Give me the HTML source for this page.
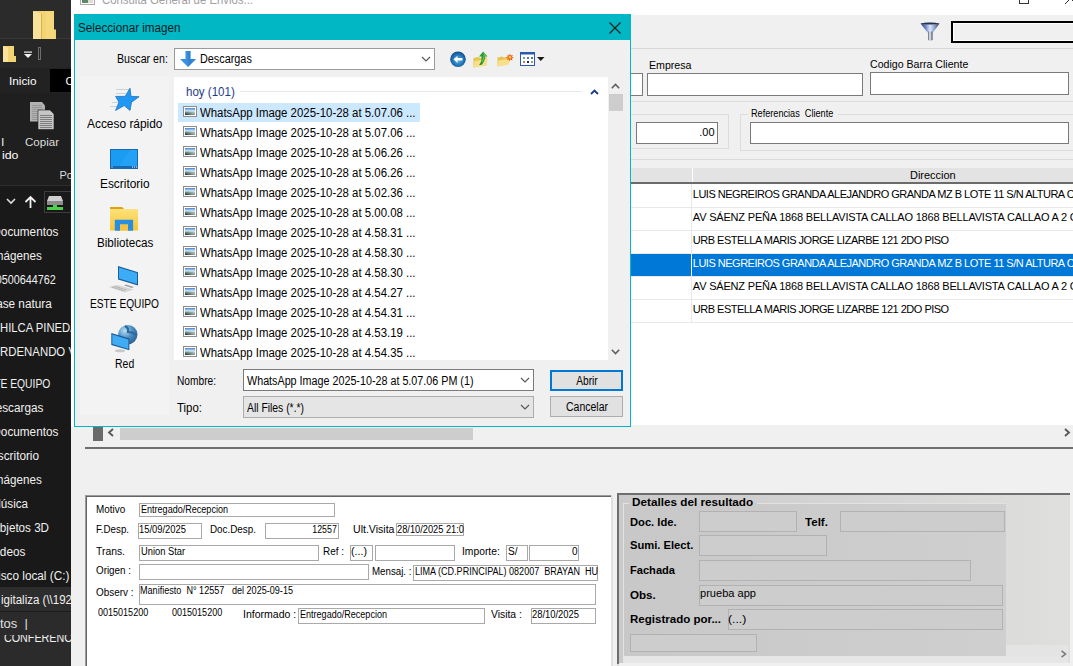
<!DOCTYPE html><html><head><meta charset='utf-8'><style>
*{margin:0;padding:0}
html,body{width:1073px;height:666px;overflow:hidden;background:#f0f0f0;position:relative}
.a{position:absolute}
.t{white-space:pre}
</style></head><body><div class="a" style="left:0px;top:0px;width:71px;height:666px;background:#191919;"></div>
<div class="a" style="left:0px;top:0px;width:71px;height:38px;background:#2b2b2b;"></div>
<div class="a" style="left:0px;top:38px;width:71px;height:30px;background:#272727;"></div>
<div class="a" style="left:0px;top:68px;width:71px;height:25px;background:#222222;"></div>
<div class="a" style="left:50px;top:69px;width:21px;height:23px;background:#000000;"></div>
<div class="a" style="left:0px;top:93px;width:71px;height:92px;background:#1f1f1f;"></div>
<div class="a" style="left:0px;top:185px;width:71px;height:1px;background:#2e2e2e;"></div>
<div class="a" style="left:0px;top:186px;width:71px;height:32px;background:#191919;"></div>
<div class="a" style="left:0px;top:38px;width:71px;height:1px;background:#3a3a3a;"></div>
<svg class="a" style="left:33px;top:11px" width="23" height="28" viewBox="0 0 23 28"><path d="M0 0H21V18.5H23V28H0Z" fill="#f3d474"/><path d="M0 0L8 2.5V28H0Z" fill="#f9e39a"/><rect x="8" y="2.5" width="1" height="25.5" fill="#dcb24a"/><rect x="13" y="0" width="8" height="28" fill="#f7db82" opacity="0.6"/></svg>
<svg class="a" style="left:3px;top:46px" width="13" height="16" viewBox="0 0 13 16"><path d="M0 0H11V10H13V16H0Z" fill="#f3d474"/><path d="M0 0L5 1.5V16H0Z" fill="#f9e39a"/></svg>
<svg class="a" style="left:24px;top:51px" width="8" height="8" viewBox="0 0 8 8"><rect x="0" y="0.5" width="8" height="1.2" fill="#eee"/><path d="M0 3h8L4 7z" fill="#f4f4f4"/></svg>
<div class="a" style="left:38px;top:47px;width:3px;height:13px;border:1px solid #6e6e6e;box-sizing:border-box;"></div>
<div class="a t" id="t0" style="top:76.00px;font-size:11px;line-height:11px;color:#ffffff;font-weight:400;font-family:'Liberation Sans';left:8.50px;transform-origin:left;transform: scaleX(1.0706);">Inicio</div>
<div class="a t" id="t1" style="top:76.00px;font-size:11px;line-height:11px;color:#ffffff;font-weight:400;font-family:'Liberation Sans';left:65.50px;transform-origin:left;transform:;">C</div>
<svg class="a" style="left:30px;top:102px" width="25" height="28" viewBox="0 0 25 28"><path d="M0 0H12L15 3.5V19.5H0Z" fill="#b2b2b2"/><path d="M2 3.5h10M2 5.5h10M2 7.5h10M2 9.5h10M2 11.5h10M2 13.5h10M2 15.5h10M2 17.5h10" stroke="#969696" stroke-width="1"/><path d="M8 8H20L24 12V27.5H8Z" fill="#c6c6c6" stroke="#1f1f1f" stroke-width="0.6"/><path d="M10 13.5h12M10 15.5h12M10 17.5h12M10 19.5h12M10 21.5h12M10 23.5h12M10 25.5h12" stroke="#7e7e7e" stroke-width="1"/></svg>
<div class="a t" id="t2" style="top:137.00px;font-size:11px;line-height:11px;color:#dcdcdc;font-weight:400;font-family:'Liberation Sans';left:25.00px;transform-origin:left;transform: scaleX(1.0492);">Copiar</div>
<div class="a t" id="t3" style="top:137.00px;font-size:11px;line-height:11px;color:#ffffff;font-weight:400;font-family:'Liberation Sans';left:1.50px;transform-origin:left;transform:;">l</div>
<div class="a t" id="t4" style="top:150.00px;font-size:11px;line-height:11px;color:#ffffff;font-weight:400;font-family:'Liberation Sans';left:1.50px;transform-origin:left;transform: scaleX(1.1234);">ido</div>
<div class="a t" id="t5" style="top:170.00px;font-size:11px;line-height:11px;color:#dcdcdc;font-weight:400;font-family:'Liberation Sans';left:59.50px;transform-origin:left;transform:;">Po</div>
<svg class="a" style="left:6px;top:198px" width="10" height="7" viewBox="0 0 10 7"><path d="M1 1l4 4 4-4" stroke="#ddd" stroke-width="1.6" fill="none"/></svg>
<svg class="a" style="left:24px;top:195px" width="13" height="14" viewBox="0 0 13 14"><path d="M6.5 13V2M1.5 7l5-5 5 5" stroke="#f0f0f0" stroke-width="1.8" fill="none"/></svg>
<div class="a" style="left:44px;top:191px;width:28px;height:22px;border:1px solid #3c3c3c;box-sizing:border-box;"></div>
<svg class="a" style="left:47px;top:196px" width="16" height="14" viewBox="0 0 16 14"><path d="M2 0h12l2 5H0z" fill="#cfcfcf"/><rect x="0" y="5" width="16" height="4" fill="#8d8d8d"/><rect x="6" y="9" width="4" height="2" fill="#4ccf4c"/><rect x="0" y="11" width="16" height="3" fill="#4ccf4c"/></svg>
<div class="a t" id="t6" style="top:226.00px;font-size:12px;line-height:12px;color:#f0f0f0;font-weight:400;font-family:'Liberation Sans';right:1014.50px;transform-origin:right;transform: scaleX(0.9800);">Documentos</div>
<div class="a t" id="t7" style="top:250.00px;font-size:12px;line-height:12px;color:#f0f0f0;font-weight:400;font-family:'Liberation Sans';right:1031.50px;transform-origin:right;transform: scaleX(0.9700);">Imágenes</div>
<div class="a t" id="t8" style="top:274.00px;font-size:12px;line-height:12px;color:#f0f0f0;font-weight:400;font-family:'Liberation Sans';right:1017.00px;transform-origin:right;transform: scaleX(0.9000);">0500644762</div>
<div class="a t" id="t9" style="top:298.00px;font-size:12px;line-height:12px;color:#f0f0f0;font-weight:400;font-family:'Liberation Sans';right:1021.50px;transform-origin:right;transform: scaleX(0.9800);">Base natura</div>
<div class="a t" id="t10" style="top:378.00px;font-size:12px;line-height:12px;color:#f0f0f0;font-weight:400;font-family:'Liberation Sans';right:1022.50px;transform-origin:right;transform: scaleX(0.8600);">ESTE EQUIPO</div>
<div class="a t" id="t11" style="top:402.00px;font-size:12px;line-height:12px;color:#f0f0f0;font-weight:400;font-family:'Liberation Sans';right:1029.50px;transform-origin:right;transform: scaleX(0.9800);">Descargas</div>
<div class="a t" id="t12" style="top:426.00px;font-size:12px;line-height:12px;color:#f0f0f0;font-weight:400;font-family:'Liberation Sans';right:1014.50px;transform-origin:right;transform: scaleX(0.9800);">Documentos</div>
<div class="a t" id="t13" style="top:450.00px;font-size:12px;line-height:12px;color:#f0f0f0;font-weight:400;font-family:'Liberation Sans';right:1033.50px;transform-origin:right;transform: scaleX(0.9800);">Escritorio</div>
<div class="a t" id="t14" style="top:474.00px;font-size:12px;line-height:12px;color:#f0f0f0;font-weight:400;font-family:'Liberation Sans';right:1031.50px;transform-origin:right;transform: scaleX(0.9700);">Imágenes</div>
<div class="a t" id="t15" style="top:498.00px;font-size:12px;line-height:12px;color:#f0f0f0;font-weight:400;font-family:'Liberation Sans';right:1044.50px;transform-origin:right;transform: scaleX(0.9700);">Música</div>
<div class="a t" id="t16" style="top:522.00px;font-size:12px;line-height:12px;color:#f0f0f0;font-weight:400;font-family:'Liberation Sans';right:1024.00px;transform-origin:right;transform: scaleX(0.9700);">Objetos 3D</div>
<div class="a t" id="t17" style="top:546.00px;font-size:12px;line-height:12px;color:#f0f0f0;font-weight:400;font-family:'Liberation Sans';right:1047.50px;transform-origin:right;transform: scaleX(0.9800);">Vídeos</div>
<div class="a t" id="t18" style="top:570.00px;font-size:12px;line-height:12px;color:#f0f0f0;font-weight:400;font-family:'Liberation Sans';right:1003.50px;transform-origin:right;transform: scaleX(0.9800);">Disco local (C:)</div>
<div class="a t" id="t19" style="top:322.00px;font-size:12px;line-height:12px;color:#f0f0f0;font-weight:400;font-family:'Liberation Sans';left:0.00px;transform-origin:left;transform: scaleX(0.9400);">HILCA PINEDA</div>
<div class="a t" id="t20" style="top:346.00px;font-size:12px;line-height:12px;color:#f0f0f0;font-weight:400;font-family:'Liberation Sans';left:0.00px;transform-origin:left;transform: scaleX(0.9500);">RDENANDO VA</div>
<div class="a" style="left:0px;top:587px;width:71px;height:24px;background:#2d2d2d;"></div>
<div class="a t" id="t21" style="top:594.00px;font-size:12px;line-height:12px;color:#f0f0f0;font-weight:400;font-family:'Liberation Sans';left:1.00px;transform-origin:left;transform: scaleX(0.9589);">igitaliza (\\192</div>
<div class="a" style="left:0px;top:611px;width:71px;height:55px;background:#2b2b2b;"></div>
<div class="a t" id="t22" style="top:618.00px;font-size:12px;line-height:12px;color:#e0e0e0;font-weight:400;font-family:'Liberation Sans';left:0.00px;transform-origin:left;transform: scaleX(1.0854);">tos  |</div>
<div class="a t" id="t23" style="top:632.00px;font-size:12px;line-height:12px;color:#f0f0f0;font-weight:400;font-family:'Liberation Sans';left:4.00px;transform-origin:left;transform: scaleX(0.8946);">CONFERENC</div>
<div class="a" style="left:0px;top:630px;width:71px;height:5px;background:#2b2b2b;"></div>
<div class="a" style="left:0px;top:611px;width:71px;height:1px;background:#1c1c1c;"></div>
<div class="a" style="left:71px;top:0px;width:3px;height:666px;background:#f0f0f0;"></div>
<div class="a" style="left:71px;top:0px;width:3px;height:427px;background:#ffffff;"></div>
<div class="a" style="left:72px;top:0px;width:1001px;height:15px;background:#ffffff;"></div>
<svg class="a" style="left:80px;top:-10px" width="15" height="15" viewBox="0 0 15 15"><rect x="0.5" y="0.5" width="14" height="14" fill="#fff" stroke="#aaa"/><rect x="2" y="2" width="6" height="11" fill="#5a8a6a"/><rect x="8" y="2" width="5" height="11" fill="#e8d8d8"/></svg>
<div class="a t" id="t24" style="top:-6.00px;font-size:12px;line-height:12px;color:#a0a0a0;font-weight:400;font-family:'Liberation Sans';left:102.00px;transform-origin:left;transform: scaleX(0.9472);">Consulta General de Envios...</div>
<svg class="a" style="left:1019px;top:-6px" width="12" height="11" viewBox="0 0 12 11"><rect x="0.5" y="0.5" width="9" height="9" fill="none" stroke="#333"/></svg>
<svg class="a" style="left:1062px;top:-10px" width="16" height="16" viewBox="0 0 16 16"><path d="M3 14L14 3M3 3L14 14" stroke="#333" stroke-width="1"/></svg>
<div class="a" style="left:631px;top:48px;width:442px;height:1px;background:#d8d8d8;"></div>
<svg class="a" style="left:920px;top:22px" width="20" height="20" viewBox="0 0 20 20"><defs><linearGradient id="fg" x1="0" x2="1"><stop offset="0" stop-color="#2e3a60"/><stop offset="0.3" stop-color="#7890d0"/><stop offset="0.5" stop-color="#dce8ff"/><stop offset="0.75" stop-color="#8aa0c8"/><stop offset="1" stop-color="#2a3048"/></linearGradient><linearGradient id="fg2" x1="0" x2="1"><stop offset="0" stop-color="#5a6478"/><stop offset="0.45" stop-color="#f0f6ff"/><stop offset="1" stop-color="#3a4050"/></linearGradient></defs><path d="M0.5 1.5Q10 -0.5 19.5 1.5L13 10.5H7.5z" fill="url(#fg)"/><path d="M0.5 1.5Q10 -0.5 19.5 1.5Q10 3.5 0.5 1.5z" fill="#2a3048"/><path d="M8 9.5h4.5v8.5q-2.2 1.5-4.5 0z" fill="url(#fg2)"/></svg>
<div class="a" style="left:951px;top:21px;width:130px;height:22px;border:2px solid #000;box-sizing:border-box;box-shadow:inset 0 0 0 1px #fff;"></div>
<div class="a t" id="t25" style="top:60.00px;font-size:11px;line-height:11px;color:#000;font-weight:400;font-family:'Liberation Sans';left:648.60px;transform-origin:left;transform: scaleX(0.9652);">Empresa</div>
<div class="a" style="left:620px;top:73px;width:23px;height:23px;background:#fff;border:1px solid #7a7a7a;box-sizing:border-box;"></div>
<div class="a" style="left:647px;top:73px;width:216px;height:23px;background:#fff;border:1px solid #7a7a7a;box-sizing:border-box;"></div>
<div class="a t" id="t26" style="top:59.00px;font-size:11px;line-height:11px;color:#000;font-weight:400;font-family:'Liberation Sans';left:869.70px;transform-origin:left;transform: scaleX(0.9625);">Codigo Barra Cliente</div>
<div class="a" style="left:870px;top:72px;width:199px;height:23px;background:#fff;border:1px solid #7a7a7a;box-sizing:border-box;"></div>
<div class="a" style="left:631px;top:101px;width:442px;height:1px;background:#dadada;"></div>
<div class="a" style="left:600px;top:114px;width:129px;height:35px;border:1px solid #dcdcdc;box-sizing:border-box;"></div>
<div class="a" style="left:636px;top:122px;width:82px;height:22px;background:#fff;border:1px solid #7a7a7a;box-sizing:border-box;"></div>
<div class="a t" id="t27" style="top:127.00px;font-size:11px;line-height:11px;color:#000;font-weight:400;font-family:'Liberation Sans';right:358.50px;transform-origin:right;transform:;">.00</div>
<div class="a" style="left:740px;top:114px;width:345px;height:37px;border:1px solid #dcdcdc;box-sizing:border-box;"></div>
<div class="a" style="left:748px;top:108px;width:90px;height:10px;background:#f0f0f0;"></div>
<div class="a t" id="t28" style="top:109.00px;font-size:10px;line-height:10px;color:#000;font-weight:400;font-family:'Liberation Sans';left:750.70px;transform-origin:left;transform: scaleX(0.9140);">Referencias  Cliente</div>
<div class="a" style="left:750px;top:122px;width:319px;height:22px;background:#fff;border:1px solid #7a7a7a;box-sizing:border-box;"></div>
<div class="a" style="left:631px;top:159px;width:442px;height:1px;background:#dadada;"></div>
<div class="a" style="left:631px;top:168px;width:442px;height:14px;background:#e3e3e3;"></div>
<div class="a" style="left:631px;top:182px;width:442px;height:2px;background:#6b6b6b;"></div>
<div class="a" style="left:692px;top:168px;width:1px;height:14px;background:#ffffff;"></div>
<div class="a" style="left:631px;top:184px;width:442px;height:241px;background:#ffffff;"></div>
<div class="a" style="left:691px;top:184px;width:1px;height:138px;background:#e8e8e8;"></div>
<div class="a" style="left:631px;top:207px;width:442px;height:1px;background:#e8e8e8;"></div>
<div class="a" style="left:631px;top:230px;width:442px;height:1px;background:#e8e8e8;"></div>
<div class="a" style="left:631px;top:253px;width:442px;height:1px;background:#e8e8e8;"></div>
<div class="a" style="left:631px;top:276px;width:442px;height:1px;background:#e8e8e8;"></div>
<div class="a" style="left:631px;top:299px;width:442px;height:1px;background:#e8e8e8;"></div>
<div class="a" style="left:631px;top:322px;width:442px;height:1px;background:#e8e8e8;"></div>
<div class="a t" id="t29" style="top:170.00px;font-size:11px;line-height:11px;color:#000;font-weight:400;font-family:'Liberation Sans';left:909.60px;transform-origin:left;transform: scaleX(0.9943);">Direccion</div>
<div class="a" style="left:631px;top:254px;width:442px;height:22px;background:#0078d7;"></div>
<div class="a" style="left:691px;top:254px;width:1px;height:22px;background:#ffffff;"></div>
<div class="a t" id="t30" style="top:189.00px;font-size:11px;line-height:11px;color:#000000;font-weight:400;font-family:'Liberation Sans';left:692.80px;transform-origin:left;transform:;letter-spacing:-0.502px;">LUIS NEGREIROS GRANDA ALEJANDRO GRANDA MZ B LOTE 11 S/N ALTURA CON</div>
<div class="a t" id="t31" style="top:212.00px;font-size:11px;line-height:11px;color:#000000;font-weight:400;font-family:'Liberation Sans';left:692.80px;transform-origin:left;transform:;letter-spacing:-0.19px;">AV SÁENZ PEÑA 1868 BELLAVISTA CALLAO 1868 BELLAVISTA CALLAO A 2 CUADRAS</div>
<div class="a t" id="t32" style="top:235.00px;font-size:11px;line-height:11px;color:#000000;font-weight:400;font-family:'Liberation Sans';left:692.80px;transform-origin:left;transform:;letter-spacing:-0.507px;">URB ESTELLA MARIS JORGE LIZARBE 121 2DO PISO</div>
<div class="a t" id="t33" style="top:258.00px;font-size:11px;line-height:11px;color:#ffffff;font-weight:400;font-family:'Liberation Sans';left:692.80px;transform-origin:left;transform:;letter-spacing:-0.502px;">LUIS NEGREIROS GRANDA ALEJANDRO GRANDA MZ B LOTE 11 S/N ALTURA CON</div>
<div class="a t" id="t34" style="top:281.00px;font-size:11px;line-height:11px;color:#000000;font-weight:400;font-family:'Liberation Sans';left:692.80px;transform-origin:left;transform:;letter-spacing:-0.19px;">AV SÁENZ PEÑA 1868 BELLAVISTA CALLAO 1868 BELLAVISTA CALLAO A 2 CUADRAS</div>
<div class="a t" id="t35" style="top:304.00px;font-size:11px;line-height:11px;color:#000000;font-weight:400;font-family:'Liberation Sans';left:692.80px;transform-origin:left;transform:;letter-spacing:-0.507px;">URB ESTELLA MARIS JORGE LIZARBE 121 2DO PISO</div>
<div class="a" style="left:85px;top:425px;width:988px;height:22px;background:#f0f0f0;"></div>
<div class="a" style="left:93px;top:427px;width:10px;height:14px;background:#6a6a6a;"></div>
<svg class="a" style="left:107px;top:428px" width="8" height="9" viewBox="0 0 8 9"><path d="M6 1L2 4.5 6 8" stroke="#555" stroke-width="1.8" fill="none"/></svg>
<div class="a" style="left:120px;top:428px;width:353px;height:12px;background:#cdcdcd;"></div>
<svg class="a" style="left:1063px;top:428px" width="8" height="9" viewBox="0 0 8 9"><path d="M2 1l4 3.5L2 8" stroke="#555" stroke-width="1.8" fill="none"/></svg>
<div class="a" style="left:85px;top:447px;width:988px;height:2px;background:#6e6e6e;"></div>
<div class="a" style="left:74px;top:14px;width:557px;height:413px;background:#f0f0f0;border:1px solid #00b7c3;box-sizing:border-box;"></div>
<div class="a" style="left:74px;top:14px;width:557px;height:26px;background:#00b7c3;"></div>
<div class="a t" id="t36" style="top:22.00px;font-size:12px;line-height:12px;color:#0a1a24;font-weight:400;font-family:'Liberation Sans';left:78.40px;transform-origin:left;transform: scaleX(0.9734);">Seleccionar imagen</div>
<svg class="a" style="left:609px;top:22px" width="12" height="12" viewBox="0 0 12 12"><path d="M0.5 0.5l11 11M11.5 0.5l-11 11" stroke="#1a1a1a" stroke-width="1.1"/></svg>
<div class="a t" id="t37" style="top:53.00px;font-size:12px;line-height:12px;color:#000;font-weight:400;font-family:'Liberation Sans';left:116.60px;transform-origin:left;transform: scaleX(0.8871);">Buscar en:</div>
<div class="a" style="left:174px;top:48px;width:261px;height:22px;background:#ffffff;border:1px solid #9a9a9a;box-sizing:border-box;"></div>
<svg class="a" style="left:180px;top:51px" width="17" height="17" viewBox="0 0 17 17"><path d="M5.5 0h5v8h5.5l-8 8L0 8h5.5z" fill="#3b8fdc"/><path d="M8 0h2.5v8h5.5l-8 8z" fill="#2a78c8" opacity="0.5"/></svg>
<div class="a t" id="t38" style="top:53.00px;font-size:12px;line-height:12px;color:#000;font-weight:400;font-family:'Liberation Sans';left:199.80px;transform-origin:left;transform: scaleX(0.9031);">Descargas</div>
<svg class="a" style="left:421px;top:56px" width="10" height="7" viewBox="0 0 10 7"><path d="M1 1l4 4 4-4" stroke="#555" stroke-width="1.1" fill="none"/></svg>
<svg class="a" style="left:450px;top:51px" width="17" height="17" viewBox="0 0 17 17"><defs><radialGradient id="bk" cx="0.5" cy="0.55" r="0.6"><stop offset="0" stop-color="#58b8e8"/><stop offset="0.65" stop-color="#1e6cb0"/><stop offset="1" stop-color="#0c3c78"/></radialGradient></defs><circle cx="8" cy="8.3" r="7.8" fill="url(#bk)"/><path d="M3.5 8.3l4-3.6v2.3h5v2.6h-5v2.3z" fill="#fff"/></svg>
<svg class="a" style="left:473px;top:51px" width="16" height="17" viewBox="0 0 16 17"><path d="M0.5 7L5 6L7 7L13.5 6V14L0.5 16.5Z" fill="#e6c450"/><path d="M1.5 10L14.5 8L13.5 14.5L0.5 16.5Z" fill="#f8e08a"/><path d="M10.2 0.5L14.5 5.5H12Q12 10.5 8.5 14H6Q9 10.5 8.5 5.5H6Z" fill="#2e9a30"/><path d="M10.2 1.5L12.5 4.5H11Q11 8 9 11" stroke="#7ad070" stroke-width="0.8" fill="none"/></svg>
<svg class="a" style="left:497px;top:53px" width="17" height="14" viewBox="0 0 17 14"><path d="M0.5 4.5L5 3.5L7 4.5L12 3.5V11L0.5 13.5Z" fill="#e6c450"/><path d="M1.5 7.5L13 5.5L12 11.5L0.5 13.5Z" fill="#f8e08a"/><path d="M13 0.5l0.9 2 2-0.6-0.9 1.9 1.9 1-2 0.7 0.5 2-1.9-0.9-0.9 1.9-0.7-2-2 0.5 0.9-1.9-1.9-0.9 2-0.7-0.5-2 1.9 0.9z" fill="#f06018"/><circle cx="13" cy="4.3" r="1.3" fill="#ffd050"/></svg>
<svg class="a" style="left:520px;top:52px" width="25" height="14" viewBox="0 0 25 14"><rect x="0.5" y="0.5" width="14" height="13" fill="#fff" stroke="#2a5ab0"/><rect x="0.5" y="0.5" width="14" height="2" fill="#2a5ab0"/><rect x="3" y="5" width="2" height="2" fill="#8090b8"/><rect x="7" y="5" width="2" height="2" fill="#5a7ab8"/><rect x="11" y="5" width="2" height="2" fill="#3a8a5a"/><rect x="3" y="9" width="2" height="2" fill="#c07a58"/><rect x="7" y="9" width="2" height="2" fill="#1a2a58"/><rect x="11" y="9" width="2" height="2" fill="#8aa878"/><path d="M17 5h7.5l-3.75 4z" fill="#1a1a1a"/></svg>
<div class="a" style="left:80px;top:76px;width:89px;height:339px;background:#f3f3f3;"></div>
<svg class="a" style="left:105px;top:82px" width="36" height="32" viewBox="0 0 36 32"><path d="M11 7.5h13M11 11.5h10M7 20.5h7M5 24.5h7" stroke="#c5d3df" stroke-width="1"/><path d="M25 6.2L26 14.4 34.1 14.7 26.5 20.2 25 28.4 19.2 23.6 10.6 28.4 14 20.2 10.6 14.4 20.2 14.4z" fill="#1e98f2" stroke="#1b70bf" stroke-width="0.8" stroke-linejoin="miter"/></svg>
<div class="a t" id="t39" style="top:118.00px;font-size:12px;line-height:12px;color:#000;font-weight:400;font-family:'Liberation Sans';left:87.00px;transform-origin:left;transform: scaleX(0.9928);">Acceso rápido</div>
<svg class="a" style="left:110px;top:149px" width="28" height="20" viewBox="0 0 28 20"><rect x="0.5" y="0.5" width="27" height="19" fill="#1a9cf2" stroke="#1668b0"/><path d="M8 19L20 1h7v18z" fill="#2aa6f6" opacity="0.6"/><rect x="1" y="17" width="26" height="2" fill="#1668b0"/><rect x="1.5" y="17.5" width="1" height="1" fill="#fff"/><rect x="22" y="17.5" width="1" height="1" fill="#fff"/><rect x="24" y="17.5" width="1" height="1" fill="#fff"/><rect x="26" y="17.5" width="1" height="1" fill="#fff"/></svg>
<div class="a t" id="t40" style="top:178.00px;font-size:12px;line-height:12px;color:#000;font-weight:400;font-family:'Liberation Sans';left:100.00px;transform-origin:left;transform: scaleX(0.9897);">Escritorio</div>
<svg class="a" style="left:104px;top:202px" width="40" height="32" viewBox="0 0 40 32"><defs><linearGradient id="lf" x1="0" y1="0" x2="0" y2="1"><stop offset="0" stop-color="#fbe27a"/><stop offset="1" stop-color="#f7c53a"/></linearGradient></defs><path d="M6 5H18L20 7L18.5 9H6Z" fill="#e0a010"/><rect x="6" y="7" width="28" height="21.5" fill="url(#lf)"/><path d="M10.8 17.8H29.1V28.8H24V22.6H16V28.8H10.8Z" fill="#2a8ee0"/><rect x="16" y="22.6" width="8" height="6" fill="#f8c440"/></svg>
<div class="a t" id="t41" style="top:237.00px;font-size:12px;line-height:12px;color:#000;font-weight:400;font-family:'Liberation Sans';left:96.60px;transform-origin:left;transform: scaleX(0.9719);">Bibliotecas</div>
<svg class="a" style="left:104px;top:260px" width="40" height="36" viewBox="0 0 40 36"><path d="M4.6 27L13.5 25L29.5 29.5L21 32.4Z" fill="#d4d4d4"/><path d="M8 27.5l5-1M11 28.5l5-1M14 29.5l5-1M17 30.5l5-1" stroke="#a8a8a8" stroke-width="0.8"/><path d="M22 24.5L30 27L28 28L20 25.5Z" fill="#a0a0a0"/><path d="M14 6L34 12.2V25.4L14 19.5Z" fill="#1a5a9a"/><path d="M15 7.4L33 13V24L15 18.6Z" fill="#3cacf4"/></svg>
<div class="a t" id="t42" style="top:298.00px;font-size:12px;line-height:12px;color:#000;font-weight:400;font-family:'Liberation Sans';left:90.00px;transform-origin:left;transform: scaleX(0.8481);">ESTE EQUIPO</div>
<svg class="a" style="left:104px;top:320px" width="40" height="36" viewBox="0 0 40 36"><defs><radialGradient id="gl" cx="0.35" cy="0.3" r="0.8"><stop offset="0" stop-color="#b8e0f8"/><stop offset="0.5" stop-color="#4a8cc0"/><stop offset="1" stop-color="#2a5a88"/></radialGradient></defs><circle cx="23.8" cy="14.6" r="9.7" fill="url(#gl)"/><path d="M21 6q4 2 3 6q5 0 8 3" stroke="#2e6a9c" stroke-width="2.2" fill="none"/><ellipse cx="16" cy="30.8" rx="5" ry="1.5" fill="#c8c8c8"/><path d="M7.3 13L25.4 18.6V30.3L7.3 24.9Z" fill="#1a5a9a"/><path d="M8.3 14.4L24.4 19.4V29L8.3 24Z" fill="#40acf4"/></svg>
<div class="a t" id="t43" style="top:358.00px;font-size:12px;line-height:12px;color:#000;font-weight:400;font-family:'Liberation Sans';left:114.80px;transform-origin:left;transform: scaleX(0.8721);">Red</div>
<div class="a" style="left:174px;top:77px;width:434px;height:283px;background:#ffffff;"></div>
<div class="a t" id="t44" style="top:86.00px;font-size:12px;line-height:12px;color:#1e3a8a;font-weight:400;font-family:'Liberation Sans';left:185.80px;transform-origin:left;transform: scaleX(0.9625);">hoy (101)</div>
<div class="a" style="left:240px;top:91px;width:342px;height:1px;background:#e3e8f0;"></div>
<svg class="a" style="left:590px;top:89px" width="9" height="6" viewBox="0 0 9 6"><path d="M1 5l3.5-3.5L8 5" stroke="#1a3a8a" stroke-width="1.8" fill="none"/></svg>
<div class="a" style="left:178px;top:103px;width:242px;height:19px;background:#cce8ff;"></div>
<svg class="a" style="left:183px;top:106px" width="14" height="11" viewBox="0 0 14 11"><defs><linearGradient id="ig" x1="0" y1="0" x2="0" y2="1"><stop offset="0" stop-color="#4a7ed0"/><stop offset="0.4" stop-color="#c8e6f4"/><stop offset="0.65" stop-color="#5a7a78"/><stop offset="1" stop-color="#1a3020"/></linearGradient><linearGradient id="ih" x1="0" y1="0" x2="1" y2="0"><stop offset="0" stop-color="#fff" stop-opacity="0"/><stop offset="1" stop-color="#fff" stop-opacity="0.55"/></linearGradient></defs><rect x="0.5" y="0.5" width="13" height="10" fill="#fff" stroke="#8c8c8c"/><rect x="2" y="2" width="10" height="7" fill="url(#ig)"/><rect x="2" y="5" width="10" height="4" fill="url(#ih)"/></svg>
<div class="a t" id="t45" style="top:107.00px;font-size:12px;line-height:12px;color:#000;font-weight:400;font-family:'Liberation Sans';left:200.20px;transform-origin:left;transform: scaleX(0.9501);">WhatsApp Image 2025-10-28 at 5.07.06 ...</div>
<svg class="a" style="left:183px;top:126px" width="14" height="11" viewBox="0 0 14 11"><defs><linearGradient id="ig" x1="0" y1="0" x2="0" y2="1"><stop offset="0" stop-color="#4a7ed0"/><stop offset="0.4" stop-color="#c8e6f4"/><stop offset="0.65" stop-color="#5a7a78"/><stop offset="1" stop-color="#1a3020"/></linearGradient><linearGradient id="ih" x1="0" y1="0" x2="1" y2="0"><stop offset="0" stop-color="#fff" stop-opacity="0"/><stop offset="1" stop-color="#fff" stop-opacity="0.55"/></linearGradient></defs><rect x="0.5" y="0.5" width="13" height="10" fill="#fff" stroke="#8c8c8c"/><rect x="2" y="2" width="10" height="7" fill="url(#ig)"/><rect x="2" y="5" width="10" height="4" fill="url(#ih)"/></svg>
<div class="a t" id="t46" style="top:127.00px;font-size:12px;line-height:12px;color:#000;font-weight:400;font-family:'Liberation Sans';left:200.20px;transform-origin:left;transform: scaleX(0.9501);">WhatsApp Image 2025-10-28 at 5.07.06 ...</div>
<svg class="a" style="left:183px;top:146px" width="14" height="11" viewBox="0 0 14 11"><defs><linearGradient id="ig" x1="0" y1="0" x2="0" y2="1"><stop offset="0" stop-color="#4a7ed0"/><stop offset="0.4" stop-color="#c8e6f4"/><stop offset="0.65" stop-color="#5a7a78"/><stop offset="1" stop-color="#1a3020"/></linearGradient><linearGradient id="ih" x1="0" y1="0" x2="1" y2="0"><stop offset="0" stop-color="#fff" stop-opacity="0"/><stop offset="1" stop-color="#fff" stop-opacity="0.55"/></linearGradient></defs><rect x="0.5" y="0.5" width="13" height="10" fill="#fff" stroke="#8c8c8c"/><rect x="2" y="2" width="10" height="7" fill="url(#ig)"/><rect x="2" y="5" width="10" height="4" fill="url(#ih)"/></svg>
<div class="a t" id="t47" style="top:147.00px;font-size:12px;line-height:12px;color:#000;font-weight:400;font-family:'Liberation Sans';left:200.20px;transform-origin:left;transform: scaleX(0.9501);">WhatsApp Image 2025-10-28 at 5.06.26 ...</div>
<svg class="a" style="left:183px;top:166px" width="14" height="11" viewBox="0 0 14 11"><defs><linearGradient id="ig" x1="0" y1="0" x2="0" y2="1"><stop offset="0" stop-color="#4a7ed0"/><stop offset="0.4" stop-color="#c8e6f4"/><stop offset="0.65" stop-color="#5a7a78"/><stop offset="1" stop-color="#1a3020"/></linearGradient><linearGradient id="ih" x1="0" y1="0" x2="1" y2="0"><stop offset="0" stop-color="#fff" stop-opacity="0"/><stop offset="1" stop-color="#fff" stop-opacity="0.55"/></linearGradient></defs><rect x="0.5" y="0.5" width="13" height="10" fill="#fff" stroke="#8c8c8c"/><rect x="2" y="2" width="10" height="7" fill="url(#ig)"/><rect x="2" y="5" width="10" height="4" fill="url(#ih)"/></svg>
<div class="a t" id="t48" style="top:167.00px;font-size:12px;line-height:12px;color:#000;font-weight:400;font-family:'Liberation Sans';left:200.20px;transform-origin:left;transform: scaleX(0.9501);">WhatsApp Image 2025-10-28 at 5.06.26 ...</div>
<svg class="a" style="left:183px;top:186px" width="14" height="11" viewBox="0 0 14 11"><defs><linearGradient id="ig" x1="0" y1="0" x2="0" y2="1"><stop offset="0" stop-color="#4a7ed0"/><stop offset="0.4" stop-color="#c8e6f4"/><stop offset="0.65" stop-color="#5a7a78"/><stop offset="1" stop-color="#1a3020"/></linearGradient><linearGradient id="ih" x1="0" y1="0" x2="1" y2="0"><stop offset="0" stop-color="#fff" stop-opacity="0"/><stop offset="1" stop-color="#fff" stop-opacity="0.55"/></linearGradient></defs><rect x="0.5" y="0.5" width="13" height="10" fill="#fff" stroke="#8c8c8c"/><rect x="2" y="2" width="10" height="7" fill="url(#ig)"/><rect x="2" y="5" width="10" height="4" fill="url(#ih)"/></svg>
<div class="a t" id="t49" style="top:187.00px;font-size:12px;line-height:12px;color:#000;font-weight:400;font-family:'Liberation Sans';left:200.20px;transform-origin:left;transform: scaleX(0.9501);">WhatsApp Image 2025-10-28 at 5.02.36 ...</div>
<svg class="a" style="left:183px;top:206px" width="14" height="11" viewBox="0 0 14 11"><defs><linearGradient id="ig" x1="0" y1="0" x2="0" y2="1"><stop offset="0" stop-color="#4a7ed0"/><stop offset="0.4" stop-color="#c8e6f4"/><stop offset="0.65" stop-color="#5a7a78"/><stop offset="1" stop-color="#1a3020"/></linearGradient><linearGradient id="ih" x1="0" y1="0" x2="1" y2="0"><stop offset="0" stop-color="#fff" stop-opacity="0"/><stop offset="1" stop-color="#fff" stop-opacity="0.55"/></linearGradient></defs><rect x="0.5" y="0.5" width="13" height="10" fill="#fff" stroke="#8c8c8c"/><rect x="2" y="2" width="10" height="7" fill="url(#ig)"/><rect x="2" y="5" width="10" height="4" fill="url(#ih)"/></svg>
<div class="a t" id="t50" style="top:207.00px;font-size:12px;line-height:12px;color:#000;font-weight:400;font-family:'Liberation Sans';left:200.20px;transform-origin:left;transform: scaleX(0.9501);">WhatsApp Image 2025-10-28 at 5.00.08 ...</div>
<svg class="a" style="left:183px;top:226px" width="14" height="11" viewBox="0 0 14 11"><defs><linearGradient id="ig" x1="0" y1="0" x2="0" y2="1"><stop offset="0" stop-color="#4a7ed0"/><stop offset="0.4" stop-color="#c8e6f4"/><stop offset="0.65" stop-color="#5a7a78"/><stop offset="1" stop-color="#1a3020"/></linearGradient><linearGradient id="ih" x1="0" y1="0" x2="1" y2="0"><stop offset="0" stop-color="#fff" stop-opacity="0"/><stop offset="1" stop-color="#fff" stop-opacity="0.55"/></linearGradient></defs><rect x="0.5" y="0.5" width="13" height="10" fill="#fff" stroke="#8c8c8c"/><rect x="2" y="2" width="10" height="7" fill="url(#ig)"/><rect x="2" y="5" width="10" height="4" fill="url(#ih)"/></svg>
<div class="a t" id="t51" style="top:227.00px;font-size:12px;line-height:12px;color:#000;font-weight:400;font-family:'Liberation Sans';left:200.20px;transform-origin:left;transform: scaleX(0.9501);">WhatsApp Image 2025-10-28 at 4.58.31 ...</div>
<svg class="a" style="left:183px;top:246px" width="14" height="11" viewBox="0 0 14 11"><defs><linearGradient id="ig" x1="0" y1="0" x2="0" y2="1"><stop offset="0" stop-color="#4a7ed0"/><stop offset="0.4" stop-color="#c8e6f4"/><stop offset="0.65" stop-color="#5a7a78"/><stop offset="1" stop-color="#1a3020"/></linearGradient><linearGradient id="ih" x1="0" y1="0" x2="1" y2="0"><stop offset="0" stop-color="#fff" stop-opacity="0"/><stop offset="1" stop-color="#fff" stop-opacity="0.55"/></linearGradient></defs><rect x="0.5" y="0.5" width="13" height="10" fill="#fff" stroke="#8c8c8c"/><rect x="2" y="2" width="10" height="7" fill="url(#ig)"/><rect x="2" y="5" width="10" height="4" fill="url(#ih)"/></svg>
<div class="a t" id="t52" style="top:247.00px;font-size:12px;line-height:12px;color:#000;font-weight:400;font-family:'Liberation Sans';left:200.20px;transform-origin:left;transform: scaleX(0.9501);">WhatsApp Image 2025-10-28 at 4.58.30 ...</div>
<svg class="a" style="left:183px;top:266px" width="14" height="11" viewBox="0 0 14 11"><defs><linearGradient id="ig" x1="0" y1="0" x2="0" y2="1"><stop offset="0" stop-color="#4a7ed0"/><stop offset="0.4" stop-color="#c8e6f4"/><stop offset="0.65" stop-color="#5a7a78"/><stop offset="1" stop-color="#1a3020"/></linearGradient><linearGradient id="ih" x1="0" y1="0" x2="1" y2="0"><stop offset="0" stop-color="#fff" stop-opacity="0"/><stop offset="1" stop-color="#fff" stop-opacity="0.55"/></linearGradient></defs><rect x="0.5" y="0.5" width="13" height="10" fill="#fff" stroke="#8c8c8c"/><rect x="2" y="2" width="10" height="7" fill="url(#ig)"/><rect x="2" y="5" width="10" height="4" fill="url(#ih)"/></svg>
<div class="a t" id="t53" style="top:267.00px;font-size:12px;line-height:12px;color:#000;font-weight:400;font-family:'Liberation Sans';left:200.20px;transform-origin:left;transform: scaleX(0.9501);">WhatsApp Image 2025-10-28 at 4.58.30 ...</div>
<svg class="a" style="left:183px;top:286px" width="14" height="11" viewBox="0 0 14 11"><defs><linearGradient id="ig" x1="0" y1="0" x2="0" y2="1"><stop offset="0" stop-color="#4a7ed0"/><stop offset="0.4" stop-color="#c8e6f4"/><stop offset="0.65" stop-color="#5a7a78"/><stop offset="1" stop-color="#1a3020"/></linearGradient><linearGradient id="ih" x1="0" y1="0" x2="1" y2="0"><stop offset="0" stop-color="#fff" stop-opacity="0"/><stop offset="1" stop-color="#fff" stop-opacity="0.55"/></linearGradient></defs><rect x="0.5" y="0.5" width="13" height="10" fill="#fff" stroke="#8c8c8c"/><rect x="2" y="2" width="10" height="7" fill="url(#ig)"/><rect x="2" y="5" width="10" height="4" fill="url(#ih)"/></svg>
<div class="a t" id="t54" style="top:287.00px;font-size:12px;line-height:12px;color:#000;font-weight:400;font-family:'Liberation Sans';left:200.20px;transform-origin:left;transform: scaleX(0.9501);">WhatsApp Image 2025-10-28 at 4.54.27 ...</div>
<svg class="a" style="left:183px;top:306px" width="14" height="11" viewBox="0 0 14 11"><defs><linearGradient id="ig" x1="0" y1="0" x2="0" y2="1"><stop offset="0" stop-color="#4a7ed0"/><stop offset="0.4" stop-color="#c8e6f4"/><stop offset="0.65" stop-color="#5a7a78"/><stop offset="1" stop-color="#1a3020"/></linearGradient><linearGradient id="ih" x1="0" y1="0" x2="1" y2="0"><stop offset="0" stop-color="#fff" stop-opacity="0"/><stop offset="1" stop-color="#fff" stop-opacity="0.55"/></linearGradient></defs><rect x="0.5" y="0.5" width="13" height="10" fill="#fff" stroke="#8c8c8c"/><rect x="2" y="2" width="10" height="7" fill="url(#ig)"/><rect x="2" y="5" width="10" height="4" fill="url(#ih)"/></svg>
<div class="a t" id="t55" style="top:307.00px;font-size:12px;line-height:12px;color:#000;font-weight:400;font-family:'Liberation Sans';left:200.20px;transform-origin:left;transform: scaleX(0.9501);">WhatsApp Image 2025-10-28 at 4.54.31 ...</div>
<svg class="a" style="left:183px;top:326px" width="14" height="11" viewBox="0 0 14 11"><defs><linearGradient id="ig" x1="0" y1="0" x2="0" y2="1"><stop offset="0" stop-color="#4a7ed0"/><stop offset="0.4" stop-color="#c8e6f4"/><stop offset="0.65" stop-color="#5a7a78"/><stop offset="1" stop-color="#1a3020"/></linearGradient><linearGradient id="ih" x1="0" y1="0" x2="1" y2="0"><stop offset="0" stop-color="#fff" stop-opacity="0"/><stop offset="1" stop-color="#fff" stop-opacity="0.55"/></linearGradient></defs><rect x="0.5" y="0.5" width="13" height="10" fill="#fff" stroke="#8c8c8c"/><rect x="2" y="2" width="10" height="7" fill="url(#ig)"/><rect x="2" y="5" width="10" height="4" fill="url(#ih)"/></svg>
<div class="a t" id="t56" style="top:327.00px;font-size:12px;line-height:12px;color:#000;font-weight:400;font-family:'Liberation Sans';left:200.20px;transform-origin:left;transform: scaleX(0.9501);">WhatsApp Image 2025-10-28 at 4.53.19 ...</div>
<svg class="a" style="left:183px;top:346px" width="14" height="11" viewBox="0 0 14 11"><defs><linearGradient id="ig" x1="0" y1="0" x2="0" y2="1"><stop offset="0" stop-color="#4a7ed0"/><stop offset="0.4" stop-color="#c8e6f4"/><stop offset="0.65" stop-color="#5a7a78"/><stop offset="1" stop-color="#1a3020"/></linearGradient><linearGradient id="ih" x1="0" y1="0" x2="1" y2="0"><stop offset="0" stop-color="#fff" stop-opacity="0"/><stop offset="1" stop-color="#fff" stop-opacity="0.55"/></linearGradient></defs><rect x="0.5" y="0.5" width="13" height="10" fill="#fff" stroke="#8c8c8c"/><rect x="2" y="2" width="10" height="7" fill="url(#ig)"/><rect x="2" y="5" width="10" height="4" fill="url(#ih)"/></svg>
<div class="a t" id="t57" style="top:347.00px;font-size:12px;line-height:12px;color:#000;font-weight:400;font-family:'Liberation Sans';left:200.20px;transform-origin:left;transform: scaleX(0.9501);">WhatsApp Image 2025-10-28 at 4.54.35 ...</div>
<div class="a" style="left:608px;top:77px;width:15px;height:283px;background:#f0f0f0;"></div>
<svg class="a" style="left:611px;top:83px" width="9" height="6" viewBox="0 0 9 6"><path d="M0.8 5.2L4.5 1.5l3.7 3.7" stroke="#606060" stroke-width="1.6" fill="none"/></svg>
<div class="a" style="left:609px;top:94px;width:14px;height:17px;background:#cdcdcd;"></div>
<svg class="a" style="left:611px;top:349px" width="9" height="6" viewBox="0 0 9 6"><path d="M0.8 0.8L4.5 4.5l3.7-3.7" stroke="#606060" stroke-width="1.6" fill="none"/></svg>
<div class="a t" id="t58" style="top:375.00px;font-size:12px;line-height:12px;color:#000;font-weight:400;font-family:'Liberation Sans';left:176.80px;transform-origin:left;transform: scaleX(0.8475);">Nombre:</div>
<div class="a" style="left:243px;top:369px;width:291px;height:22px;background:#ffffff;border:1px solid #7a7a7a;box-sizing:border-box;"></div>
<div class="a t" id="t59" style="top:375.00px;font-size:12px;line-height:12px;color:#000;font-weight:400;font-family:'Liberation Sans';left:247.00px;transform-origin:left;transform: scaleX(0.8959);">WhatsApp Image 2025-10-28 at 5.07.06 PM (1)</div>
<svg class="a" style="left:520px;top:377px" width="10" height="7" viewBox="0 0 10 7"><path d="M1 1l4 4 4-4" stroke="#555" stroke-width="1.1" fill="none"/></svg>
<div class="a t" id="t60" style="top:402.00px;font-size:12px;line-height:12px;color:#000;font-weight:400;font-family:'Liberation Sans';left:176.80px;transform-origin:left;transform: scaleX(0.9529);">Tipo:</div>
<div class="a" style="left:243px;top:396px;width:291px;height:22px;background:#e5e5e5;border:1px solid #adadad;box-sizing:border-box;"></div>
<div class="a t" id="t61" style="top:402.00px;font-size:12px;line-height:12px;color:#000;font-weight:400;font-family:'Liberation Sans';left:247.00px;transform-origin:left;transform: scaleX(0.8634);">All Files (*.*)</div>
<svg class="a" style="left:520px;top:404px" width="10" height="7" viewBox="0 0 10 7"><path d="M1 1l4 4 4-4" stroke="#555" stroke-width="1.1" fill="none"/></svg>
<div class="a" style="left:550px;top:370px;width:73px;height:21px;background:#e1e1e1;border:2px solid #0078d7;box-sizing:border-box;"></div>
<div class="a t" id="t62" style="top:375.00px;font-size:12px;line-height:12px;color:#000;font-weight:400;font-family:'Liberation Sans';left:586.50px;transform:translateX(-50%) scaleX(0.8483);">Abrir</div>
<div class="a" style="left:550px;top:396px;width:73px;height:21px;background:#e1e1e1;border:1px solid #adadad;box-sizing:border-box;"></div>
<div class="a t" id="t63" style="top:401.00px;font-size:12px;line-height:12px;color:#000;font-weight:400;font-family:'Liberation Sans';left:586.50px;transform:translateX(-50%) scaleX(0.8744);">Cancelar</div>
<div class="a" style="left:85px;top:495px;width:528px;height:171px;background:#ffffff;"></div>
<div class="a" style="left:85px;top:495px;width:528px;height:2px;background:#9c9c9c;"></div>
<div class="a" style="left:85px;top:495px;width:2px;height:171px;background:#9c9c9c;"></div>
<div class="a" style="left:86px;top:496px;width:527px;height:1px;background:#646464;"></div>
<div class="a" style="left:86px;top:496px;width:1px;height:170px;background:#646464;"></div>
<div class="a" style="left:611px;top:495px;width:2px;height:171px;background:#e0e0e0;"></div>
<div class="a t" id="t64" style="top:505.00px;font-size:10px;line-height:10px;color:#000;font-weight:400;font-family:'Liberation Sans';left:95.80px;transform-origin:left;transform: scaleX(0.9914);">Motivo</div>
<div class="a" style="left:139px;top:503px;width:196px;height:14px;background:#ffffff;border:1px solid #a9a9a9;box-sizing:border-box;"></div>
<div class="a t" id="t65" style="top:505.00px;font-size:10px;line-height:10px;color:#000;font-weight:400;font-family:'Liberation Sans';left:140.60px;transform-origin:left;transform: scaleX(0.9045);">Entregado/Recepcion</div>
<div class="a t" id="t66" style="top:525.00px;font-size:10px;line-height:10px;color:#000;font-weight:400;font-family:'Liberation Sans';left:95.80px;transform-origin:left;transform: scaleX(0.9733);">F.Desp.</div>
<div class="a" style="left:138px;top:523px;width:64px;height:16px;background:#ffffff;border:1px solid #a9a9a9;box-sizing:border-box;"></div>
<div class="a t" id="t67" style="top:525.00px;font-size:10px;line-height:10px;color:#000;font-weight:400;font-family:'Liberation Sans';left:139.00px;transform-origin:left;transform: scaleX(0.9388);">15/09/2025</div>
<div class="a t" id="t68" style="top:525.00px;font-size:10px;line-height:10px;color:#000;font-weight:400;font-family:'Liberation Sans';left:210.40px;transform-origin:left;transform: scaleX(0.9853);">Doc.Desp.</div>
<div class="a" style="left:265px;top:523px;width:74px;height:16px;background:#ffffff;border:1px solid #a9a9a9;box-sizing:border-box;"></div>
<div class="a t" id="t69" style="top:525.00px;font-size:10px;line-height:10px;color:#000;font-weight:400;font-family:'Liberation Sans';right:736.00px;transform-origin:right;transform: scaleX(0.8809);">12557</div>
<div class="a t" id="t70" style="top:525.00px;font-size:10px;line-height:10px;color:#000;font-weight:400;font-family:'Liberation Sans';left:352.90px;transform-origin:left;transform: scaleX(1.0565);">Ult.Visita</div>
<div class="a" style="left:396px;top:523px;width:68px;height:13px;background:#ffffff;border:1px solid #a9a9a9;box-sizing:border-box;"></div>
<div class="a t" id="t71" style="top:525.00px;font-size:10px;line-height:10px;color:#000;font-weight:400;font-family:'Liberation Sans';left:397.00px;transform-origin:left;transform: scaleX(0.9267);">28/10/2025 21:0</div>
<div class="a t" id="t72" style="top:547.00px;font-size:10px;line-height:10px;color:#000;font-weight:400;font-family:'Liberation Sans';left:95.80px;transform-origin:left;transform: scaleX(1.0369);">Trans.</div>
<div class="a" style="left:139px;top:545px;width:180px;height:16px;background:#ffffff;border:1px solid #a9a9a9;box-sizing:border-box;"></div>
<div class="a t" id="t73" style="top:547.00px;font-size:10px;line-height:10px;color:#000;font-weight:400;font-family:'Liberation Sans';left:140.60px;transform-origin:left;transform: scaleX(0.9312);">Union Star</div>
<div class="a t" id="t74" style="top:547.00px;font-size:10px;line-height:10px;color:#000;font-weight:400;font-family:'Liberation Sans';left:322.50px;transform-origin:left;transform: scaleX(0.9941);">Ref :</div>
<div class="a" style="left:350px;top:545px;width:23px;height:16px;background:#ffffff;border:1px solid #a9a9a9;box-sizing:border-box;"></div>
<div class="a t" id="t75" style="top:547.00px;font-size:10px;line-height:10px;color:#000;font-weight:400;font-family:'Liberation Sans';left:351.00px;transform-origin:left;transform: scaleX(1.0667);">(...)</div>
<div class="a" style="left:375px;top:545px;width:80px;height:16px;background:#ffffff;border:1px solid #a9a9a9;box-sizing:border-box;"></div>
<div class="a t" id="t76" style="top:547.00px;font-size:10px;line-height:10px;color:#000;font-weight:400;font-family:'Liberation Sans';left:461.60px;transform-origin:left;transform: scaleX(1.0303);">Importe:</div>
<div class="a" style="left:506px;top:545px;width:22px;height:16px;background:#ffffff;border:1px solid #a9a9a9;box-sizing:border-box;"></div>
<div class="a t" id="t77" style="top:547.00px;font-size:10px;line-height:10px;color:#000;font-weight:400;font-family:'Liberation Sans';left:507.50px;transform-origin:left;transform: scaleX(1.0050);">S/</div>
<div class="a" style="left:529px;top:545px;width:50px;height:16px;background:#ffffff;border:1px solid #a9a9a9;box-sizing:border-box;"></div>
<div class="a t" id="t78" style="top:547.00px;font-size:10px;line-height:10px;color:#000;font-weight:400;font-family:'Liberation Sans';right:495.50px;transform-origin:right;transform:;">0</div>
<div class="a t" id="t79" style="top:566.00px;font-size:10px;line-height:10px;color:#000;font-weight:400;font-family:'Liberation Sans';left:95.80px;transform-origin:left;transform: scaleX(0.9838);">Origen :</div>
<div class="a" style="left:139px;top:564px;width:230px;height:16px;background:#ffffff;border:1px solid #a9a9a9;box-sizing:border-box;"></div>
<div class="a t" id="t80" style="top:567.00px;font-size:10px;line-height:10px;color:#000;font-weight:400;font-family:'Liberation Sans';left:371.80px;transform-origin:left;transform: scaleX(0.9710);">Mensaj. :</div>
<div class="a" style="left:413px;top:565px;width:185px;height:16px;background:#ffffff;border:1px solid #a9a9a9;box-sizing:border-box;"></div>
<div class="a t" id="t81" style="top:567.00px;font-size:10px;line-height:10px;color:#000;font-weight:400;font-family:'Liberation Sans';left:414.50px;transform-origin:left;transform: scaleX(0.9022);">LIMA (CD.PRINCIPAL) 082007  BRAYAN  HU</div>
<div class="a t" id="t82" style="top:588.00px;font-size:10px;line-height:10px;color:#000;font-weight:400;font-family:'Liberation Sans';left:95.70px;transform-origin:left;transform: scaleX(0.9921);">Observ :</div>
<div class="a" style="left:139px;top:584px;width:457px;height:21px;background:#ffffff;border:1px solid #a9a9a9;box-sizing:border-box;"></div>
<div class="a t" id="t83" style="top:586.00px;font-size:10px;line-height:10px;color:#000;font-weight:400;font-family:'Liberation Sans';left:139.70px;transform-origin:left;transform: scaleX(0.9077);">Manifiesto  N° 12557   del 2025-09-15</div>
<div class="a t" id="t84" style="top:608.00px;font-size:10px;line-height:10px;color:#000;font-weight:400;font-family:'Liberation Sans';left:98.00px;transform-origin:left;transform: scaleX(0.9025);">0015015200</div>
<div class="a t" id="t85" style="top:608.00px;font-size:10px;line-height:10px;color:#000;font-weight:400;font-family:'Liberation Sans';left:171.80px;transform-origin:left;transform: scaleX(0.9025);">0015015200</div>
<div class="a t" id="t86" style="top:610.00px;font-size:10px;line-height:10px;color:#000;font-weight:400;font-family:'Liberation Sans';left:243.40px;transform-origin:left;transform: scaleX(1.0535);">Informado :</div>
<div class="a" style="left:298px;top:608px;width:187px;height:16px;background:#ffffff;border:1px solid #a9a9a9;box-sizing:border-box;"></div>
<div class="a t" id="t87" style="top:610.00px;font-size:10px;line-height:10px;color:#000;font-weight:400;font-family:'Liberation Sans';left:299.50px;transform-origin:left;transform: scaleX(0.9045);">Entregado/Recepcion</div>
<div class="a t" id="t88" style="top:610.00px;font-size:10px;line-height:10px;color:#000;font-weight:400;font-family:'Liberation Sans';left:491.30px;transform-origin:left;transform: scaleX(1.0354);">Visita :</div>
<div class="a" style="left:531px;top:608px;width:65px;height:16px;background:#ffffff;border:1px solid #a9a9a9;box-sizing:border-box;"></div>
<div class="a t" id="t89" style="top:610.00px;font-size:10px;line-height:10px;color:#000;font-weight:400;font-family:'Liberation Sans';left:532.00px;transform-origin:left;transform: scaleX(0.9388);">28/10/2025</div>
<div class="a" style="left:617px;top:493px;width:454px;height:173px;background:#dcdcdc;"></div>
<div class="a" style="left:619px;top:495px;width:451px;height:168px;background:linear-gradient(90deg,#cacaca,#d6d6d6 60%,#dfdfdd);"></div>
<div class="a" style="left:617px;top:493px;width:453px;height:2px;background:#6e6e6e;"></div>
<div class="a" style="left:617px;top:493px;width:2px;height:171px;background:#6e6e6e;"></div>
<div class="a" style="left:1070px;top:493px;width:3px;height:173px;background:#f0f0f0;"></div>
<div class="a" style="left:623px;top:503px;width:383px;height:153px;background:linear-gradient(90deg,#c8c8c8,#cfcfcf);"></div>
<div class="a" style="left:623px;top:503px;width:1px;height:153px;background:#e2e2e2;"></div>
<div class="a" style="left:623px;top:503px;width:6px;height:1px;background:#e2e2e2;"></div>
<div class="a" style="left:757px;top:503px;width:249px;height:1px;background:#e2e2e2;"></div>
<div class="a" style="left:619px;top:663px;width:451px;height:3px;background:#f0f0f0;"></div>
<div class="a t" id="t90" style="top:497.00px;font-size:11px;line-height:11px;color:#000;font-weight:700;font-family:'Liberation Sans';left:632.40px;transform-origin:left;transform: scaleX(1.0658);">Detalles del resultado</div>
<div class="a t" id="t91" style="top:517.00px;font-size:11px;line-height:11px;color:#000;font-weight:700;font-family:'Liberation Sans';left:629.60px;transform-origin:left;transform: scaleX(1.0165);">Doc. Ide.</div>
<div class="a" style="left:699px;top:511px;width:98px;height:21px;background:#cdcdcd;border:1px solid #b2b2b2;box-sizing:border-box;"></div>
<div class="a t" id="t92" style="top:517.00px;font-size:11px;line-height:11px;color:#000;font-weight:700;font-family:'Liberation Sans';left:804.50px;transform-origin:left;transform: scaleX(1.0506);">Telf.</div>
<div class="a" style="left:840px;top:511px;width:165px;height:21px;background:#cdcdcd;border:1px solid #b2b2b2;box-sizing:border-box;"></div>
<div class="a t" id="t93" style="top:540.00px;font-size:11px;line-height:11px;color:#000;font-weight:700;font-family:'Liberation Sans';left:629.60px;transform-origin:left;transform: scaleX(1.0167);">Sumi. Elect.</div>
<div class="a" style="left:699px;top:535px;width:128px;height:21px;background:#cdcdcd;border:1px solid #b2b2b2;box-sizing:border-box;"></div>
<div class="a t" id="t94" style="top:565.00px;font-size:11px;line-height:11px;color:#000;font-weight:700;font-family:'Liberation Sans';left:629.60px;transform-origin:left;transform: scaleX(1.0081);">Fachada</div>
<div class="a" style="left:699px;top:560px;width:272px;height:21px;background:#cdcdcd;border:1px solid #b2b2b2;box-sizing:border-box;"></div>
<div class="a t" id="t95" style="top:590.00px;font-size:11px;line-height:11px;color:#000;font-weight:700;font-family:'Liberation Sans';left:629.60px;transform-origin:left;transform: scaleX(1.0551);">Obs.</div>
<div class="a" style="left:699px;top:585px;width:304px;height:21px;background:#cdcdcd;border:1px solid #b2b2b2;box-sizing:border-box;"></div>
<div class="a t" id="t96" style="top:588.00px;font-size:11px;line-height:11px;color:#000;font-weight:400;font-family:'Liberation Sans';left:699.50px;transform-origin:left;transform: scaleX(1.0059);">prueba app</div>
<div class="a t" id="t97" style="top:614.00px;font-size:11px;line-height:11px;color:#000;font-weight:700;font-family:'Liberation Sans';left:629.60px;transform-origin:left;transform: scaleX(1.0484);">Registrado por...</div>
<div class="a" style="left:728px;top:609px;width:275px;height:21px;background:#cdcdcd;border:1px solid #b2b2b2;box-sizing:border-box;"></div>
<div class="a t" id="t98" style="top:614.00px;font-size:11px;line-height:11px;color:#000;font-weight:400;font-family:'Liberation Sans';left:728.40px;transform-origin:left;transform: scaleX(1.1091);">(...)</div>
<div class="a" style="left:630px;top:634px;width:127px;height:18px;background:#cdcdcd;border:1px solid #b2b2b2;box-sizing:border-box;"></div>
<div class="a" style="left:623px;top:656px;width:440px;height:1px;background:#f4f4f4;"></div>
<div class="a" style="left:1006px;top:645px;width:62px;height:18px;background:#e4e4e4;"></div>
<div class="a" style="left:623px;top:656px;width:445px;height:7px;background:#e6e6e6;"></div>
<svg class="a" style="left:1060px;top:650px" width="8" height="8" viewBox="0 0 8 8"><path d="M1.5 0.8L5.5 4 1.5 7.2" stroke="#7a7a7a" stroke-width="1.6" fill="none"/></svg></body></html>
